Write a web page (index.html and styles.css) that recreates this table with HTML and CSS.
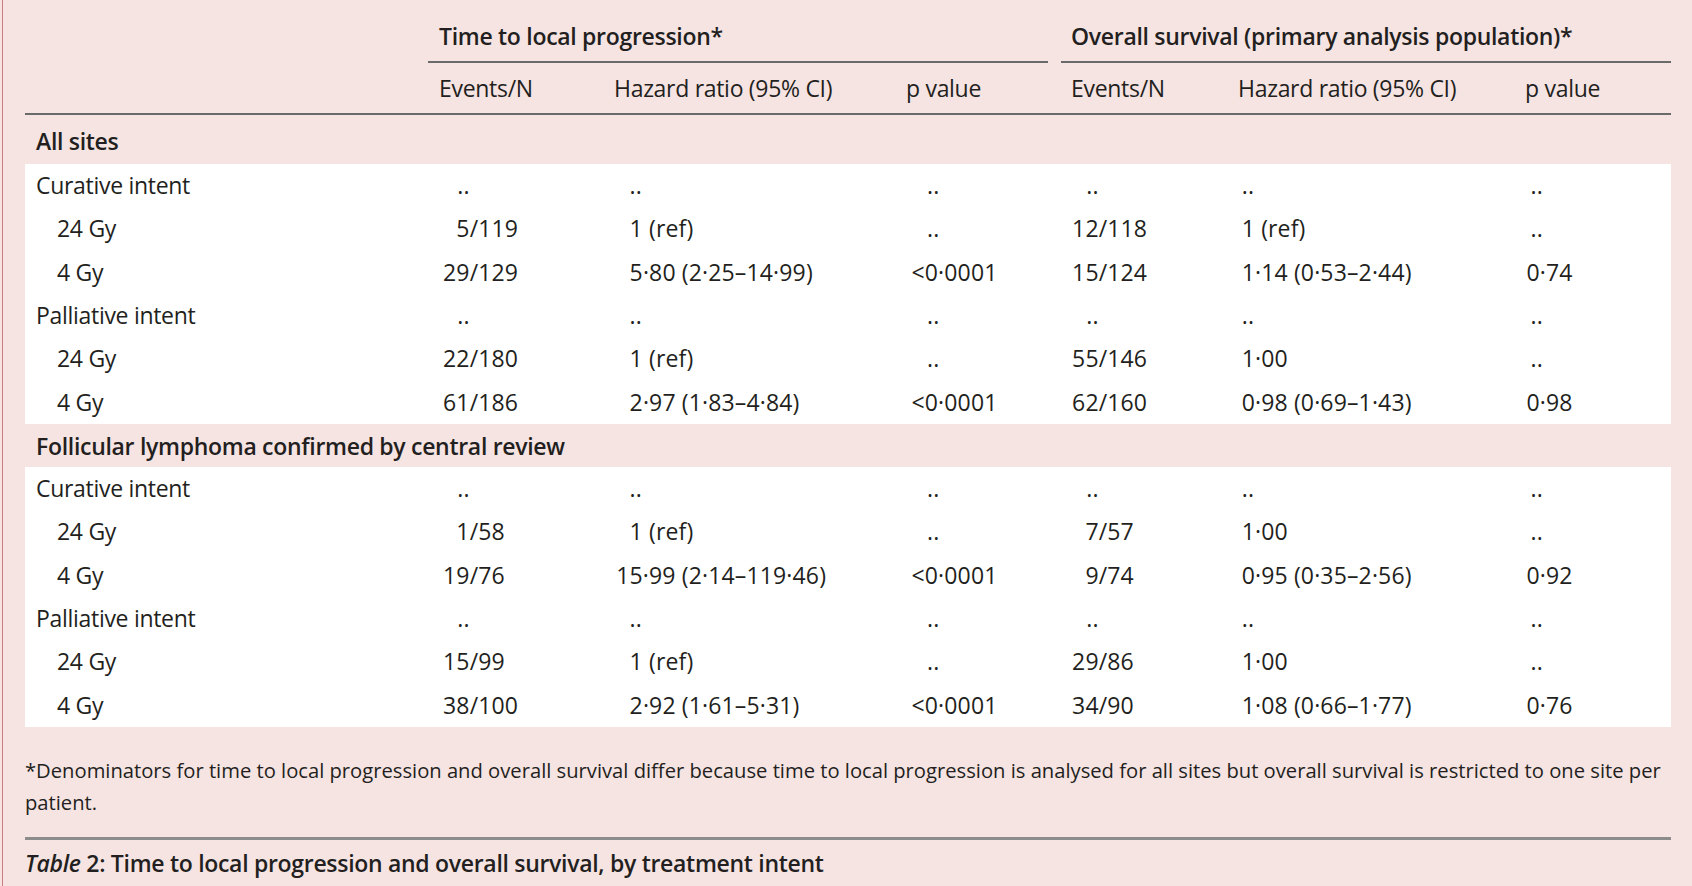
FILE: index.html
```html
<!DOCTYPE html>
<html lang="en">
<head>
<meta charset="utf-8">
<title>Table 2</title>
<link rel="stylesheet" href="styles.css">
</head>
<body>
<div class="page">
  <table class="results">
    <colgroup>
      <col class="w-label"><col class="w-ev1"><col class="w-hr1"><col class="w-p1"><col class="w-gap"><col class="w-ev2"><col class="w-hr2"><col class="w-p2">
    </colgroup>
    <thead>
      <tr class="group-row">
        <th></th>
        <th colspan="3" class="grp grp-a">Time to local progression*</th>
        <th class="gap"></th>
        <th colspan="3" class="grp grp-b">Overall survival (primary analysis population)*</th>
      </tr>
      <tr class="col-row">
        <th></th>
        <th class="h-ev1">Events/N</th>
        <th class="h-std">Hazard ratio (95% CI)</th>
        <th class="h-std">p value</th>
        <th class="gap"></th>
        <th class="h-ev2">Events/N</th>
        <th class="h-std">Hazard ratio (95% CI)</th>
        <th class="h-std">p value</th>
      </tr>
    </thead>
    <tbody>
      <tr class="section"><th colspan="8" class="sec-first">All sites</th></tr>
    </tbody>
    <tbody class="block">
      <tr><td class="lab">Curative intent</td><td class="ev1"><span class="num">..</span></td><td class="hr1">..</td><td class="p1 na">..</td><td></td><td class="ev2"><span class="num">..</span></td><td class="hr2">..</td><td class="p2 na">..</td></tr>
      <tr><td class="lab sub">24 Gy</td><td class="ev1"><span class="num">5</span>/119</td><td class="hr1">1 (ref)</td><td class="p1 na">..</td><td></td><td class="ev2"><span class="num">12</span>/118</td><td class="hr2">1 (ref)</td><td class="p2 na">..</td></tr>
      <tr><td class="lab sub">4 Gy</td><td class="ev1"><span class="num">29</span>/129</td><td class="hr1">5·80 (2·25–14·99)</td><td class="p1">&lt;0·0001</td><td></td><td class="ev2"><span class="num">15</span>/124</td><td class="hr2">1·14 (0·53–2·44)</td><td class="p2">0·74</td></tr>
      <tr><td class="lab">Palliative intent</td><td class="ev1"><span class="num">..</span></td><td class="hr1">..</td><td class="p1 na">..</td><td></td><td class="ev2"><span class="num">..</span></td><td class="hr2">..</td><td class="p2 na">..</td></tr>
      <tr><td class="lab sub">24 Gy</td><td class="ev1"><span class="num">22</span>/180</td><td class="hr1">1 (ref)</td><td class="p1 na">..</td><td></td><td class="ev2"><span class="num">55</span>/146</td><td class="hr2">1·00</td><td class="p2 na">..</td></tr>
      <tr><td class="lab sub">4 Gy</td><td class="ev1"><span class="num">61</span>/186</td><td class="hr1">2·97 (1·83–4·84)</td><td class="p1">&lt;0·0001</td><td></td><td class="ev2"><span class="num">62</span>/160</td><td class="hr2">0·98 (0·69–1·43)</td><td class="p2">0·98</td></tr>
    </tbody>
    <tbody>
      <tr class="section"><th colspan="8" class="sec-next">Follicular lymphoma confirmed by central review</th></tr>
    </tbody>
    <tbody class="block">
      <tr><td class="lab">Curative intent</td><td class="ev1"><span class="num">..</span></td><td class="hr1">..</td><td class="p1 na">..</td><td></td><td class="ev2"><span class="num">..</span></td><td class="hr2">..</td><td class="p2 na">..</td></tr>
      <tr><td class="lab sub">24 Gy</td><td class="ev1"><span class="num">1</span>/58</td><td class="hr1">1 (ref)</td><td class="p1 na">..</td><td></td><td class="ev2"><span class="num">7</span>/57</td><td class="hr2">1·00</td><td class="p2 na">..</td></tr>
      <tr><td class="lab sub">4 Gy</td><td class="ev1"><span class="num">19</span>/76</td><td class="hr1 wide">15·99 (2·14–119·46)</td><td class="p1">&lt;0·0001</td><td></td><td class="ev2"><span class="num">9</span>/74</td><td class="hr2">0·95 (0·35–2·56)</td><td class="p2">0·92</td></tr>
      <tr><td class="lab">Palliative intent</td><td class="ev1"><span class="num">..</span></td><td class="hr1">..</td><td class="p1 na">..</td><td></td><td class="ev2"><span class="num">..</span></td><td class="hr2">..</td><td class="p2 na">..</td></tr>
      <tr><td class="lab sub">24 Gy</td><td class="ev1"><span class="num">15</span>/99</td><td class="hr1">1 (ref)</td><td class="p1 na">..</td><td></td><td class="ev2"><span class="num">29</span>/86</td><td class="hr2">1·00</td><td class="p2 na">..</td></tr>
      <tr><td class="lab sub">4 Gy</td><td class="ev1"><span class="num">38</span>/100</td><td class="hr1">2·92 (1·61–5·31)</td><td class="p1">&lt;0·0001</td><td></td><td class="ev2"><span class="num">34</span>/90</td><td class="hr2">1·08 (0·66–1·77)</td><td class="p2">0·76</td></tr>
    </tbody>
  </table>
  <p class="footnote">*Denominators for time to local progression and overall survival differ because time to local progression is analysed for all sites but overall survival is restricted to one site per patient.</p>
  <p class="caption"><span class="cap-label"><em>Table</em> 2:</span> Time to local progression and overall survival, by treatment intent</p>
</div>
</body>
</html>
```
FILE: styles.css
```css
html, body {
  margin: 0;
  padding: 0;
}
body {
  background: #f6e4e3;
  color: #231f20;
  font-family: "Open Sans", "Liberation Sans", sans-serif;
  font-size: 23px;
  line-height: 30px;
  letter-spacing: -0.3px;
}
.page {
  margin-left: 2px;
  border-left: 1px solid #cd7a82;
  padding: 0 21px 0 22px;
  min-height: 886px;
  box-sizing: border-box;
}
.results {
  width: 1646px;
  border-collapse: separate;
  border-spacing: 0;
  table-layout: fixed;
}
.w-label { width: 403px; }
.w-ev1 { width: 175px; }
.w-hr1 { width: 292px; }
.w-p1 { width: 153px; }
.w-gap { width: 13px; }
.w-ev2 { width: 166px; }
.w-hr2 { width: 287px; }
.w-p2 { width: 157px; }

th, td {
  padding: 0;
  text-align: left;
  font-weight: 400;
  white-space: nowrap;
  vertical-align: top;
}
.group-row th {
  padding-top: 21px;
  padding-bottom: 10px;
}
.grp {
  font-weight: 600;
  border-bottom: 2px solid #6a6a6a;
}
.grp-a { padding-left: 11px; }
.grp-b { padding-left: 10px; }
.col-row th {
  padding-top: 10px;
  padding-bottom: 10px;
  border-bottom: 2px solid #6a6a6a;
}
.h-ev1, .h-std { padding-left: 11px; }
.h-ev2 { padding-left: 10px; }

.section th {
  font-weight: 600;
  padding-left: 11px;
}
.sec-first { padding-top: 11px; padding-bottom: 8px; }
.sec-next { padding-top: 7px; padding-bottom: 6px; }

.block td {
  background: #ffffff;
  padding-top: 6px;
  padding-bottom: 7.33px;
  letter-spacing: 0.15px;
}
.block td.lab {
  padding-left: 11px;
  letter-spacing: -0.3px;
}
.block td.lab.sub { padding-left: 32px; }

.num {
  display: inline-block;
  width: 1.16em;
  text-align: right;
}
.block .ev1 { padding-left: 15px; }
.block .ev2 { padding-left: 11px; }
.block .hr1 { padding-left: 26.6px; }
.block .hr1.wide { text-indent: -0.58em; }
.block .hr2 { padding-left: 14.7px; }
.block .p1 { padding-left: 16.5px; }
.block .p1.na { padding-left: 32px; }
.block .p2 { padding-left: 12.5px; }
.block .p2.na { padding-left: 16.6px; }

.footnote {
  margin: 27px 0 0;
  font-size: 20.2px;
  letter-spacing: 0;
  line-height: 32.3px;
  padding-bottom: 18px;
  border-bottom: 3px solid #8c8c8c;
}
.caption {
  margin: 0;
  padding-top: 8px;
  font-weight: 600;
  line-height: 30px;
}
.cap-label em {
  font-style: italic;
}
```
